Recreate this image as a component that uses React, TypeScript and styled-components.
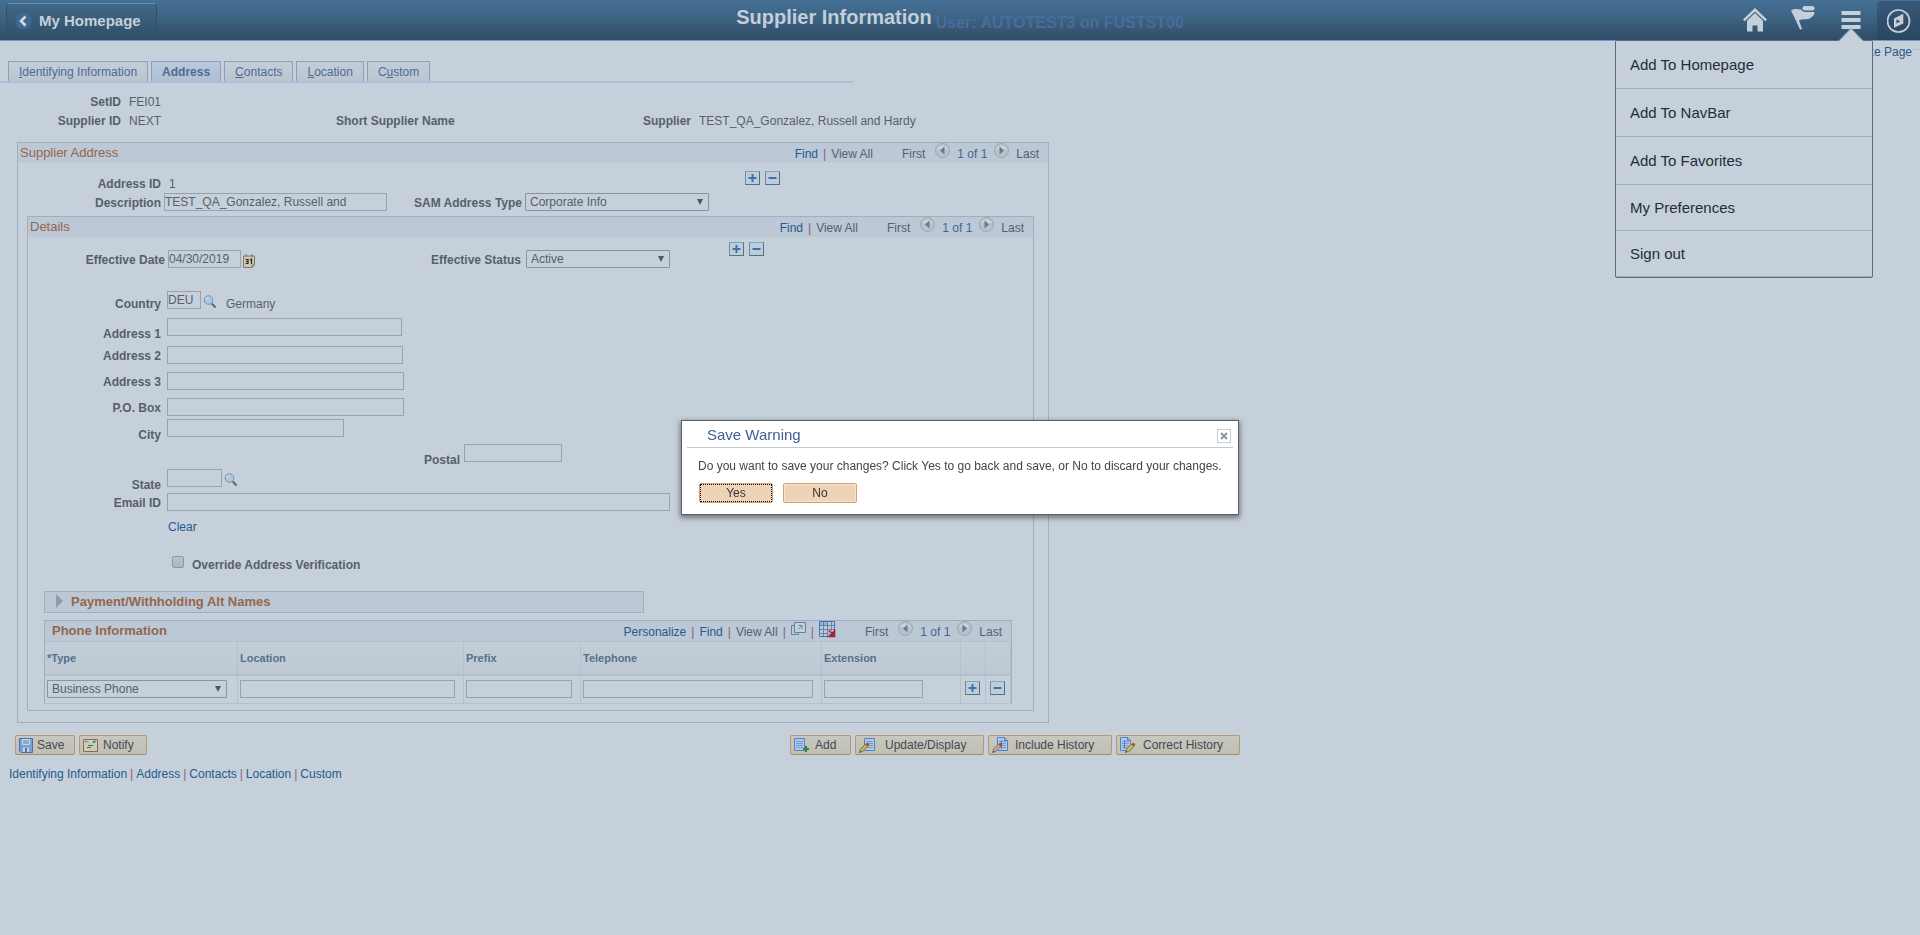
import React from 'react';
import styled, { createGlobalStyle, css } from 'styled-components';

const color = {
  page: '#c6d0da',
  text: '#56606c',
  link: '#245a8e',
  title: '#94664a',
  bar: '#bcc8d5',
  line: '#9fafc0',
  softLine: '#b3c0cd',
  field: '#98a3af',
  tab: '#4e6b95',
};

const GlobalStyle = createGlobalStyle`
  *, *::before, *::after { box-sizing: border-box; }
  body {
    margin: 0;
    min-height: 100vh;
    background: ${color.page};
    color: ${color.text};
    font: 12px/20px "Liberation Sans", Arial, sans-serif;
  }
  button, input, select { font: inherit; color: inherit; margin: 0; }
  a { color: ${color.link}; text-decoration: none; }
`;

/* ---------- banner ---------- */

const Banner = styled.header`
  position: relative;
  display: grid;
  grid-template-columns: 1fr auto 1fr;
  height: 41px;
  border-bottom: 1px solid #6f9bc8;
  background: linear-gradient(#447095, #3e6383 45%, #304b67);
`;

const BackButton = styled.button`
  display: flex;
  align-items: center;
  justify-self: start;
  gap: 7px;
  height: 35px;
  margin: 3px 0 0 6px;
  padding: 0 15px 0 8px;
  border: 1px solid #2f506d;
  border-top-color: #5f8db3;
  border-radius: 4px;
  background: linear-gradient(#416787, #31506c);
  color: #c6d0da;
  font-size: 15px;
  font-weight: bold;
`;

const TitleGroup = styled.div`
  display: flex;
  gap: 4px;
  height: 40px;
  line-height: 34px;
  font-weight: bold;
`;

const PageTitle = styled.h1`
  margin: 0;
  color: #c3ced9;
  font-size: 20px;
`;

const UserInfo = styled.span`
  padding-top: 6px;
  color: #466e9a;
  font-size: 16px;
`;

const BannerActions = styled.div`
  display: flex;
  justify-content: flex-end;
`;

const IconButton = styled.button<{ $active?: boolean }>`
  display: flex;
  align-items: center;
  justify-content: center;
  width: ${p => (p.$active ? 43 : 48)}px;
  height: 39px;
  margin: ${p => (p.$active ? '1px 0 0 2px' : '0')};
  padding: 0;
  border: 0;
  border-radius: 4px 0 0 0;
  background: ${p => (p.$active ? 'linear-gradient(#38597a, #2a4660)' : 'none')};
  color: #c6d0da;
`;

const Menu = styled.nav`
  position: absolute;
  z-index: 2;
  top: 40px;
  right: 47px;
  width: 258px;
  border: 1px solid #5d6a79;
  border-radius: 2px;
  background: ${color.page};
`;

const MenuArrow = styled.svg`
  position: absolute;
  top: -13px;
  right: 8px;
`;

const MenuItem = styled.a<{ $compact?: boolean }>`
  display: block;
  height: ${p => (p.$compact ? 46 : 48)}px;
  padding-left: 14px;
  border-bottom: 1px solid ${color.line};
  color: #222d3b;
  font-size: 15px;
  line-height: ${p => (p.$compact ? 46 : 48)}px;
`;

/* ---------- page frame ---------- */

const PageBar = styled.div`
  display: flex;
  align-items: flex-end;
  justify-content: flex-end;
  height: 20px;
  line-height: 18px;
  &::after {
    content: '';
    width: 8px;
    height: 1px;
    margin-bottom: 11px;
    background: ${color.softLine};
  }
`;

const Tabs = styled.nav`
  display: flex;
  gap: 3px;
  max-width: 853px;
  height: 22px;
  padding-left: 8px;
  border-bottom: 2px solid #aebfd5;
`;

const Tab = styled.button<{ $active?: boolean }>`
  height: 20px;
  padding: 0 10px;
  border: 1px solid #8d9fbd;
  border-bottom: 0;
  background: linear-gradient(#c4ced9, #bbc5d0);
  color: ${color.tab};
  line-height: 20px;
  ${p => p.$active && css`
    background: linear-gradient(#bac9da, #aebfd5);
    font-weight: bold;
  `}
`;

const Summary = styled.div`
  display: grid;
  grid-template-columns: 121px 199px 299px auto 1fr;
  column-gap: 8px;
  grid-auto-rows: 19px;
  max-width: 1050px;
  margin-top: 9px;
`;

const SummaryLabel = styled.span<{ $right?: boolean; $next?: boolean }>`
  font-weight: bold;
  text-align: ${p => (p.$right ? 'right' : 'left')};
  ${p => p.$next && 'grid-column-start: 1;'}
`;

const Value = styled.span<{ $width?: number; $drop?: number; $indent?: number }>`
  width: ${p => (p.$width ? `${p.$width}px` : 'auto')};
  padding-top: ${p => p.$drop ?? 0}px;
  margin-left: ${p => p.$indent ?? 0}px;
`;

const Panel = styled.section`
  max-width: 1032px;
  margin: 12px 0 0 17px;
  padding-bottom: 11px;
  border: 1px solid ${color.line};
`;

const InnerPanel = styled.section`
  margin: 0 14px 0 9px;
  padding-bottom: 6px;
  border: 1px solid ${color.line};
`;

const PanelHeader = styled.div<{ $indent?: boolean }>`
  display: flex;
  justify-content: space-between;
  height: 20px;
  padding: 0 9px 0 ${p => (p.$indent ? 7 : 2)}px;
  background: ${color.bar};
`;

const PanelTitle = styled.h2<{ $bold?: boolean }>`
  margin: 0;
  color: ${color.title};
  font-size: 13px;
  font-weight: ${p => (p.$bold ? 'bold' : 'normal')};
  line-height: 20px;
`;

const Tools = styled.div`
  display: flex;
  align-items: flex-start;
  gap: 5px;
  line-height: 22px;
`;

const Pager = styled.div`
  display: flex;
  align-items: flex-start;
  gap: 7px;
  margin-left: 24px;
`;

const FirstText = styled.span`
  margin-right: 3px;
`;

const PlainButton = styled.button`
  display: flex;
  padding: 0;
  border: 0;
  background: none;
`;

const Divider = styled.span`
  color: #85607c;
`;

const Count = styled.span`
  color: #42678f;
`;

/* ---------- form parts ---------- */

const Rows = styled.div<{ $top: number }>`
  padding-top: ${p => p.$top}px;
`;

const Row = styled.div<{ $height: number }>`
  display: flex;
  align-items: flex-start;
  height: ${p => p.$height}px;
`;

const Group = styled.div<{ $width?: number }>`
  display: flex;
  align-items: flex-start;
  width: ${p => (p.$width ? `${p.$width}px` : 'auto')};
  padding-top: 8px;
`;

const Label = styled.label<{ $width: number; $gap?: number; $drop?: number }>`
  flex: none;
  width: ${p => p.$width}px;
  margin-right: ${p => p.$gap ?? 6}px;
  padding-top: ${p => p.$drop ?? 0}px;
  font-weight: bold;
  text-align: right;
`;

const Field = styled.input<{ $width: number }>`
  display: block;
  flex: none;
  width: ${p => p.$width}px;
  height: 18px;
  padding: 0;
  border: 1px solid ${color.field};
  border-radius: 0;
  background: transparent;
  outline: 0;
`;

const SelectBox = styled.span<{ $width: number }>`
  position: relative;
  display: block;
  flex: none;
  width: ${p => p.$width}px;
  height: 18px;
`;

const SelectField = styled.select`
  display: block;
  width: 100%;
  height: 18px;
  padding: 0 18px 0 4px;
  border: 1px solid #8994a2;
  border-radius: 1px;
  background: transparent;
  appearance: none;
  line-height: 16px;
`;

const SelectArrow = styled.svg`
  position: absolute;
  top: 6px;
  right: 6px;
  pointer-events: none;
`;

const SmallButtons = styled.div`
  display: flex;
  gap: 5px;
`;

const SquareButton = styled.button`
  display: flex;
  width: 15px;
  height: 14px;
  padding: 0;
  border: 1px solid;
  border-color: #86a2b6 #4e7288 #4e7288 #6b8ca3;
  background: #bfcdda;
`;

const LookupButton = styled(PlainButton)`
  margin: 4px 0 0 2px;
`;

const CheckRow = styled.div`
  display: flex;
  align-items: flex-start;
  gap: 8px;
  height: 36px;
  padding-left: 144px;
`;

const CheckBox = styled.input`
  width: 12px;
  height: 12px;
  margin: 1px 0 0;
  appearance: none;
  border: 1px solid #8c97a3;
  border-radius: 2px;
  background: linear-gradient(#bac4ce, #aab4be);
`;

const CheckLabel = styled.label`
  font-weight: bold;
`;

const ClearLink = styled.a`
  margin-left: 140px;
`;

const Collapsed = styled.button`
  display: flex;
  align-items: flex-start;
  gap: 8px;
  width: 100%;
  max-width: 600px;
  height: 22px;
  margin: 0 0 7px 16px;
  padding: 2px 11px;
  border: 1px solid ${color.line};
  background: ${color.bar};
  color: ${color.title};
  font-size: 13px;
  font-weight: bold;
  line-height: 15px;
`;

const PhonePanel = styled.section`
  margin: 0 21px 0 16px;
  border: 1px solid ${color.line};
  border-bottom: 0;
`;

const PhoneTable = styled.table`
  width: 100%;
  table-layout: fixed;
  border-spacing: 0;
`;

const HeadCell = styled.th<{ $width: number }>`
  width: ${p => p.$width}px;
  height: 35px;
  padding: 0 2px;
  border: solid ${color.softLine};
  border-width: 1px 1px 2px 0;
  background: linear-gradient(#c3cdd8, #bfc9d4);
  color: #56708f;
  font-size: 11px;
  text-align: left;
`;

const Cell = styled.td`
  height: 28px;
  padding: 4px 2px 0;
  border: solid ${color.softLine};
  border-width: 0 1px 1px 0;
  vertical-align: top;
`;

const ButtonCell = styled(Cell)`
  padding: 5px 4px 0;
`;

/* ---------- footer ---------- */

const ActionRow = styled.div`
  display: flex;
  justify-content: space-between;
  max-width: 1240px;
  margin-top: 12px;
  padding-left: 15px;
`;

const ActionGroup = styled.div`
  display: flex;
  gap: 4px;
`;

const ActionButton = styled.button<{ $width: number; $gap?: number }>`
  display: flex;
  align-items: center;
  gap: ${p => p.$gap ?? 4}px;
  width: ${p => p.$width}px;
  height: 20px;
  padding: 0 0 0 3px;
  border: 1px solid #b39b6e;
  border-bottom-color: #a68b66;
  border-radius: 2px;
  background: linear-gradient(#c8c8c0, #c2bfb2);
  color: #414a54;
  line-height: 16px;
`;

const FooterLinks = styled.nav`
  display: flex;
  gap: 3px;
  margin: 9px 0 0 9px;
`;

/* ---------- dialog ---------- */

const Overlay = styled.div`
  position: fixed;
  inset: 0;
  z-index: 3;
  display: flex;
  align-items: center;
  justify-content: center;
`;

const Dialog = styled.section`
  width: 558px;
  height: 95px;
  padding: 0 5px;
  border: 1px solid #5f6062;
  background: #fff;
  box-shadow: 0 2px 5px 1px rgba(60, 60, 60, 0.6);
`;

const DialogHeader = styled.div`
  display: flex;
  align-items: flex-start;
  justify-content: space-between;
  height: 27px;
  padding: 0 2px 0 20px;
  border-bottom: 1px solid #c6c8d2;
`;

const DialogTitle = styled.h2`
  margin: 0;
  color: #3f5f95;
  font-size: 15px;
  font-weight: normal;
  line-height: 27px;
`;

const CloseButton = styled.button`
  display: flex;
  align-items: center;
  justify-content: center;
  width: 14px;
  height: 14px;
  margin-top: 8px;
  padding: 0;
  border: 1px solid #c9cdd4;
  background: #fff;
`;

const DialogText = styled.p`
  margin: 8px 0 7px 11px;
  color: #444;
`;

const DialogButtons = styled.div`
  display: flex;
  gap: 10px;
  padding-left: 12px;
`;

const DialogButton = styled.button<{ $focused?: boolean }>`
  width: 74px;
  height: 20px;
  padding: 0;
  border: 1px solid #d3a070;
  border-radius: 2px;
  background: #efd3b6;
  box-shadow: inset 0 0 0 1px #f8e4ce;
  color: #333;
  line-height: 17px;
  ${p => p.$focused && css`
    outline: 1px dotted #000;
    outline-offset: -2px;
  `}
`;

/* ---------- drawings ---------- */

const HomeIcon = () => (
  <svg width="24" height="24" viewBox="0 0 24 24" fill="currentColor">
    <path d="M12 0 24 11.5 22.3 13.3 12 3.4 1.7 13.3 0 11.5z" />
    <path d="M12 5 20 12.7V23.5H14.5V17.5H9.5V23.5H4V12.7z" />
  </svg>
);

const FlagIcon = () => (
  <svg width="24" height="28" viewBox="0 0 24 28" fill="currentColor">
    <path d="M0 4.500C3 2.500 6 3 10 3.500 11 5.500 13 6 16 6H23.500C23.500 9 22 10.500 19.500 12 16 14.500 12 12 8 14.500L11 23 9 23.500 3.500 11.500z" />
    <rect x="11.500" y="0" width="12" height="4.500" rx="2.200" />
  </svg>
);

const BarsIcon = () => (
  <svg width="20" height="20" viewBox="0 0 20 20" fill="currentColor">
    <path d="M0.500 1H19.500V5H0.500zM0.500 8H19.500V12H0.500zM0.500 15H19.500V19H0.500z" />
  </svg>
);

const CompassIcon = () => (
  <svg width="24" height="24" viewBox="0 0 24 24">
    <circle cx="11.500" cy="12" r="11" fill="none" stroke="currentColor" strokeWidth="1.700" />
    <path d="M16.300 4.800V14.500L7 18.800V9.500z" fill="currentColor" />
    <path d="M9.500 10.500 13.300 12.300 9.500 14.600z" fill="#2f4d69" />
  </svg>
);

const BackIcon = () => (
  <svg width="17" height="20" viewBox="0 0 17 20">
    <ellipse cx="8.500" cy="10" rx="8" ry="8.500" fill="#3f6990" />
    <path d="M10.500 5.500 6 10 10.500 14.500" fill="none" stroke="#d2dae2" strokeWidth="2.600" />
  </svg>
);

const RoundArrow = ({ back }: { back?: boolean }) => (
  <svg width="15" height="15" viewBox="0 0 15 15">
    <circle cx="7.500" cy="7.500" r="7" fill="#b9c2cc" stroke="#98a4b0" />
    <path d="M2 6A6 6 0 0 1 13 6z" fill="#c9d1d9" />
    <path d={back ? 'M9.500 3.500V11.500L5 7.500z' : 'M5.500 3.500V11.500L10 7.500z'} fill="#6d7986" />
  </svg>
);

const SignIcon = ({ minus }: { minus?: boolean }) => (
  <svg width="13" height="12" viewBox="0 0 13 12" stroke="#3f72ad" strokeWidth="2">
    <path d={minus ? 'M2.500 6H10.500' : 'M2.500 6H10.500M6.500 2V10'} />
  </svg>
);

const LookupIcon = () => (
  <svg width="14" height="14" viewBox="0 0 14 14">
    <path d="M8.800 8.500 12.500 12.500" stroke="#5c6a58" strokeWidth="2" />
    <circle cx="5.500" cy="5" r="4.300" fill="#a9c8e6" stroke="#7f8e9d" />
    <path d="M3 5A2.500 2.500 0 0 1 5.500 2.500" fill="none" stroke="#cddcea" strokeWidth="1.200" />
  </svg>
);

const CalendarIcon = () => (
  <svg width="12" height="14" viewBox="0 0 12 14">
    <path d="M.5 2H11.500V10.500L9 13.500H.5z" fill="#cdc9b0" stroke="#7d7a66" />
    <path d="M3 0V3M9 0V3M9 13.500V11H11.500" stroke="#7d7a66" fill="none" />
    <path d="M2.500 5.500H5V9.500H2.500M3 7.500H5M7 6 8.500 5V10" stroke="#2b2b2b" strokeWidth="1.200" fill="none" />
  </svg>
);

const PopoutIcon = () => (
  <svg width="15" height="14" viewBox="0 0 15 14" fill="none" stroke="#6580a3">
    <path d="M3.500 4.500H.5V13.500H7.500V11" />
    <path d="M3.500 1.500H14.500V11.500H3.500z" fill="#c3d0dd" />
    <path d="M7 8.500 10.500 5M7.500 4.500H11V8" />
  </svg>
);

const GridIcon = () => (
  <svg width="17" height="17" viewBox="0 0 17 17" fill="none">
    <path d="M.5.500H15.500V15.500H.5z" fill="#bccbdc" stroke="#4670b4" />
    <path d="M1 1H9V4H1z" fill="#8fb0e0" />
    <path d="M1 4.500H15M1 8.500H15M1 12.500H10M4.500 1V15M8.500 1V15M12.500 1V10" stroke="#6c80a0" />
    <path d="M10 9.500 14 13.500M15.500 10V15.500H10z" stroke="#9c2737" strokeWidth="1.600" fill="#9c2737" />
  </svg>
);

const SaveIcon = () => (
  <svg width="14" height="15" viewBox="0 0 14 15" fill="none">
    <path d="M.5.500H13.500V14.500H2L.5 13z" fill="#7c9fd2" stroke="#4a70b4" />
    <path d="M3 1H11V7H3z" fill="#c8d4e0" />
    <path d="M4 3H10M4 5H10" stroke="#5a7fbd" />
    <path d="M4 9.500H10V14H4z" fill="#c8d4e0" />
    <path d="M6 10H8V14H6z" fill="#4a70b4" />
  </svg>
);

const NotifyIcon = () => (
  <svg width="15" height="13" viewBox="0 0 15 13" fill="none">
    <path d="M.5.500H14.500V12.500H.5z" fill="#c7cfba" stroke="#8a6a55" />
    <path d="M2 2.500H4L5 3.500M5 6.500H10M4 8.500H8" stroke="#6b5b50" />
    <path d="M10 3.500 12.500 2" stroke="#2f8a4c" strokeWidth="2" />
  </svg>
);

const Pencil = ({ x, shaft, edge }: { x: number; shaft: string; edge: string }) => (
  <g transform={`translate(${x} 0)`}>
    <path d="M2 14 8 8" stroke={edge} strokeWidth="4" />
    <path d="M2 14 8 8" stroke={shaft} strokeWidth="2" />
    <path d="M7.500 8.500 9.500 6.500" stroke="#b4473c" strokeWidth="3" />
    <path d="M0 16 1 13 3 15z" fill="#555" />
  </g>
);

type PageIconProps = { mark: 'plus' | 'pencil' | 'history' | 'correct' };

const PageIcon = ({ mark }: PageIconProps) => {
  const folded = mark === 'history' || mark === 'correct';
  const x = mark === 'plus' || mark === 'correct' ? 0 : 5;
  return (
    <svg width="16" height="16" viewBox="0 0 16 16" fill="none">
      <g transform={`translate(${x} 0)`}>
        <path
          d={folded ? 'M.5.500H7.500L10.500 3.500V13.500H.5z' : 'M.5 1.500H10.500V13.500H.5z'}
          fill="#b3c8e4"
          stroke="#5580c4"
        />
        <path d="M2 4.500H9M2 6.500H9M2 8.500H9M2 10.500H9" stroke="#7599d0" />
        {folded && <path d="M4.500 3V12M7.500.500V3.500H10.500" stroke="#5580c4" />}
      </g>
      {mark === 'plus' && <path d="M9 12H15M12 9V15" stroke="#2f8449" strokeWidth="2" />}
      {mark === 'pencil' && <Pencil x={0} shaft="#c6bf55" edge="#8c8440" />}
      {mark === 'history' && <Pencil x={0} shaft="#c5a9a2" edge="#94807d" />}
      {mark === 'correct' && <Pencil x={5} shaft="#d0c958" edge="#8c8440" />}
    </svg>
  );
};

/* ---------- composed parts ---------- */

const RecordPager = () => (
  <Pager>
    <FirstText>First</FirstText>
    <PlainButton aria-label="Previous row"><RoundArrow back /></PlainButton>
    <Count>1 of 1</Count>
    <PlainButton aria-label="Next row"><RoundArrow /></PlainButton>
    <span>Last</span>
  </Pager>
);

const RecordTools = () => (
  <Tools>
    <a href="#find">Find</a>
    <Divider>|</Divider>
    <span>View All</span>
    <RecordPager />
  </Tools>
);

const AddRemove = () => (
  <SmallButtons>
    <SquareButton aria-label="Add row"><SignIcon /></SquareButton>
    <SquareButton aria-label="Delete row"><SignIcon minus /></SquareButton>
  </SmallButtons>
);

type DropdownProps = { id?: string; width: number; value: string; label?: string };

const Dropdown = ({ id, width, value, label }: DropdownProps) => (
  <SelectBox $width={width}>
    <SelectField id={id} aria-label={label} defaultValue={value}>
      <option>{value}</option>
    </SelectField>
    <SelectArrow width="6" height="6" viewBox="0 0 6 6" fill="#4c5763">
      <path d="M0 0H6L3 6z" />
    </SelectArrow>
  </SelectBox>
);

type LineProps = {
  id: string;
  label: string;
  width: number;
  height: number;
  drop?: number;
  labelWidth?: number;
  value?: string;
  children?: React.ReactNode;
};

const FormLine = ({ id, label, width, height, drop = 0, labelWidth = 133, value = '', children }: LineProps) => (
  <Row $height={height}>
    <Label htmlFor={id} $width={labelWidth} $gap={labelWidth === 133 ? 6 : 4} $drop={drop}>{label}</Label>
    <Field id={id} $width={width} defaultValue={value} />
    {children}
  </Row>
);

const Lookup = () => (
  <LookupButton aria-label="Look up"><LookupIcon /></LookupButton>
);

const footerLinks = ['Identifying Information', 'Address', 'Contacts', 'Location', 'Custom'];

export default function App() {
  return (
    <>
      <GlobalStyle />
      <Banner>
        <BackButton><BackIcon />My Homepage</BackButton>
        <TitleGroup>
          <PageTitle>Supplier Information</PageTitle>
          <UserInfo>User: AUTOTEST3 on FUSTST00</UserInfo>
        </TitleGroup>
        <BannerActions>
          <IconButton aria-label="Home"><HomeIcon /></IconButton>
          <IconButton aria-label="Notifications"><FlagIcon /></IconButton>
          <IconButton aria-label="Actions"><BarsIcon /></IconButton>
          <IconButton aria-label="NavBar" $active><CompassIcon /></IconButton>
        </BannerActions>
        <Menu>
          <MenuArrow width="26" height="14" viewBox="0 0 26 14">
            <path d="M0 14 13 0 26 14z" fill={color.page} />
            <path d="M.5 13 13 .5 25.500 13" fill="none" stroke="#8795a4" />
          </MenuArrow>
          <MenuItem href="#homepage">Add To Homepage</MenuItem>
          <MenuItem href="#navbar">Add To NavBar</MenuItem>
          <MenuItem href="#favorites">Add To Favorites</MenuItem>
          <MenuItem href="#preferences" $compact>My Preferences</MenuItem>
          <MenuItem href="#signout" $compact>Sign out</MenuItem>
        </Menu>
      </Banner>

      <main>
        <PageBar><a href="#personalize">Personalize Page</a></PageBar>
        <Tabs>
          <Tab><u>I</u>dentifying Information</Tab>
          <Tab $active>Address</Tab>
          <Tab><u>C</u>ontacts</Tab>
          <Tab><u>L</u>ocation</Tab>
          <Tab>C<u>u</u>stom</Tab>
        </Tabs>

        <Summary>
          <SummaryLabel $right>SetID</SummaryLabel>
          <Value>FEI01</Value>
          <SummaryLabel $right $next>Supplier ID</SummaryLabel>
          <Value>NEXT</Value>
          <SummaryLabel>Short Supplier Name</SummaryLabel>
          <SummaryLabel>Supplier</SummaryLabel>
          <Value>TEST_QA_Gonzalez, Russell and Hardy</Value>
        </Summary>

        <Panel>
          <PanelHeader>
            <PanelTitle>Supplier Address</PanelTitle>
            <RecordTools />
          </PanelHeader>
          <Rows $top={8}>
            <Row $height={22}>
              <Label as="span" $width={143} $gap={8} $drop={3}>Address ID</Label>
              <Value $width={576} $drop={3}>1</Value>
              <AddRemove />
            </Row>
            <Row $height={23}>
              <Label htmlFor="description" $width={143} $gap={3}>Description</Label>
              <Field id="description" $width={223} defaultValue="TEST_QA_Gonzalez, Russell and" />
              <Label htmlFor="sam" $width={135} $gap={3}>SAM Address Type</Label>
              <Dropdown id="sam" width={184} value="Corporate Info" />
            </Row>
          </Rows>

          <InnerPanel>
            <PanelHeader>
              <PanelTitle>Details</PanelTitle>
              <RecordTools />
            </PanelHeader>
            <Rows $top={5}>
              <Row $height={49}>
                <Group $width={701}>
                  <Label htmlFor="effdt" $width={137} $gap={3}>Effective Date</Label>
                  <Field id="effdt" $width={73} defaultValue="04/30/2019" />
                  <LookupButton aria-label="Choose a date"><CalendarIcon /></LookupButton>
                  <Label htmlFor="status" $width={266} $gap={5}>Effective Status</Label>
                  <Dropdown id="status" width={144} value="Active" />
                </Group>
                <AddRemove />
              </Row>
              <FormLine id="country" label="Country" width={34} height={27} drop={3} value="DEU">
                <Lookup />
                <Value $indent={9} $drop={3}>Germany</Value>
              </FormLine>
              <FormLine id="address1" label="Address 1" width={235} height={28} drop={6} />
              <FormLine id="address2" label="Address 2" width={236} height={26} />
              <FormLine id="address3" label="Address 3" width={237} height={26} />
              <FormLine id="pobox" label="P.O. Box" width={237} height={21} />
              <FormLine id="city" label="City" width={177} height={25} drop={6} />
              <FormLine id="postal" label="Postal" width={98} height={25} drop={6} labelWidth={432} />
              <FormLine id="state" label="State" width={55} height={24} drop={6}>
                <Lookup />
              </FormLine>
              <FormLine id="email" label="Email ID" width={503} height={24} />
              <Row $height={38}><ClearLink href="#clear">Clear</ClearLink></Row>
              <CheckRow>
                <CheckBox type="checkbox" id="override" />
                <CheckLabel htmlFor="override">Override Address Verification</CheckLabel>
              </CheckRow>
            </Rows>

            <Collapsed>
              <svg width="7" height="14" viewBox="0 0 7 14" fill="#8e9cab"><path d="M0 0 7 7 0 14z" /></svg>
              Payment/Withholding Alt Names
            </Collapsed>

            <PhonePanel>
              <PanelHeader $indent>
                <PanelTitle $bold>Phone Information</PanelTitle>
                <Tools>
                  <a href="#personalize-grid">Personalize</a>
                  <Divider>|</Divider>
                  <a href="#find-phone">Find</a>
                  <Divider>|</Divider>
                  <span>View All</span>
                  <Divider>|</Divider>
                  <PlainButton aria-label="Open grid in a window"><PopoutIcon /></PlainButton>
                  <Divider>|</Divider>
                  <PlainButton aria-label="Download grid"><GridIcon /></PlainButton>
                  <RecordPager />
                </Tools>
              </PanelHeader>
              <PhoneTable>
                <thead>
                  <tr>
                    <HeadCell $width={193}>*Type</HeadCell>
                    <HeadCell $width={226}>Location</HeadCell>
                    <HeadCell $width={117}>Prefix</HeadCell>
                    <HeadCell $width={241}>Telephone</HeadCell>
                    <HeadCell $width={139}>Extension</HeadCell>
                    <HeadCell $width={25} aria-label="Add" />
                    <HeadCell $width={25} aria-label="Delete" />
                  </tr>
                </thead>
                <tbody>
                  <tr>
                    <Cell><Dropdown label="Type" width={180} value="Business Phone" /></Cell>
                    <Cell><Field aria-label="Location" $width={215} /></Cell>
                    <Cell><Field aria-label="Prefix" $width={106} /></Cell>
                    <Cell><Field aria-label="Telephone" $width={230} /></Cell>
                    <Cell><Field aria-label="Extension" $width={99} /></Cell>
                    <ButtonCell><SquareButton aria-label="Add phone"><SignIcon /></SquareButton></ButtonCell>
                    <ButtonCell><SquareButton aria-label="Delete phone"><SignIcon minus /></SquareButton></ButtonCell>
                  </tr>
                </tbody>
              </PhoneTable>
            </PhonePanel>
          </InnerPanel>
        </Panel>

        <ActionRow>
          <ActionGroup>
            <ActionButton $width={60}><SaveIcon />Save</ActionButton>
            <ActionButton $width={68} $gap={5}><NotifyIcon />Notify</ActionButton>
          </ActionGroup>
          <ActionGroup>
            <ActionButton $width={61} $gap={5}><PageIcon mark="plus" />Add</ActionButton>
            <ActionButton $width={129} $gap={10}><PageIcon mark="pencil" />Update/Display</ActionButton>
            <ActionButton $width={124} $gap={7}><PageIcon mark="history" />Include History</ActionButton>
            <ActionButton $width={124} $gap={7}><PageIcon mark="correct" />Correct History</ActionButton>
          </ActionGroup>
        </ActionRow>

        <FooterLinks>
          {footerLinks.map((name, i) => (
            <React.Fragment key={name}>
              {i > 0 && <Divider>|</Divider>}
              <a href={`#${name.toLowerCase().replace(' ', '-')}`}>{name}</a>
            </React.Fragment>
          ))}
        </FooterLinks>
      </main>

      <Overlay>
        <Dialog role="dialog" aria-labelledby="warning-title">
          <DialogHeader>
            <DialogTitle id="warning-title">Save Warning</DialogTitle>
            <CloseButton aria-label="Close">
              <svg width="8" height="8" viewBox="0 0 8 8" stroke="#8b9aaa" strokeWidth="2"><path d="M1 1 7 7M7 1 1 7" /></svg>
            </CloseButton>
          </DialogHeader>
          <DialogText>Do you want to save your changes? Click Yes to go back and save, or No to discard your changes.</DialogText>
          <DialogButtons>
            <DialogButton $focused>Yes</DialogButton>
            <DialogButton>No</DialogButton>
          </DialogButtons>
        </Dialog>
      </Overlay>
    </>
  );
}
